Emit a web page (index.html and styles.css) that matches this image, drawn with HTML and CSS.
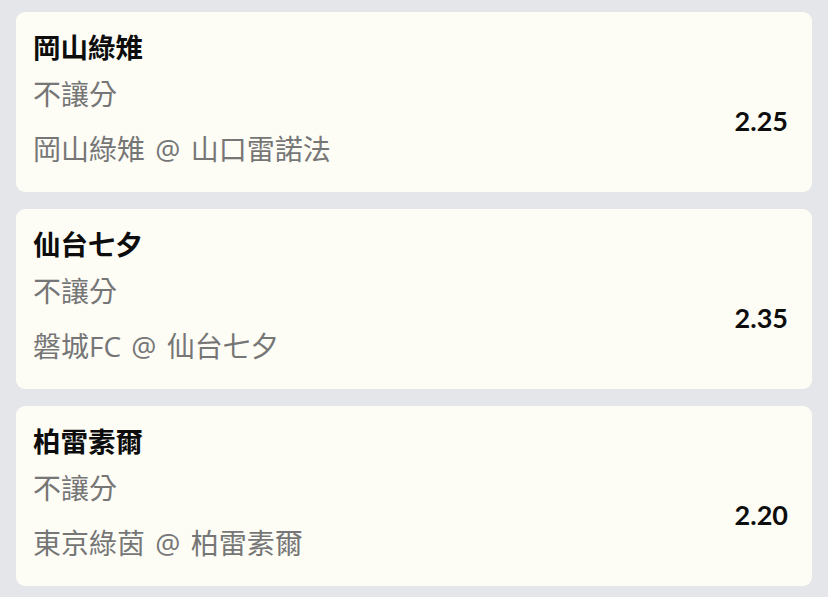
FILE: index.html
```html
<!DOCTYPE html>
<html lang="zh-Hant">
<head>
<meta charset="utf-8">
<link rel="stylesheet" href="styles.css">
</head>
<body>
<div class="list">
  <div class="card">
    <div class="title">岡山綠雉</div>
    <div class="row">
      <div class="info">
        <div class="market">不讓分</div>
        <div class="match">岡山綠雉 @ 山口雷諾法</div>
      </div>
      <div class="odds">2.25</div>
    </div>
  </div>
  <div class="card">
    <div class="title">仙台七夕</div>
    <div class="row">
      <div class="info">
        <div class="market">不讓分</div>
        <div class="match">磐城FC @ 仙台七夕</div>
      </div>
      <div class="odds">2.35</div>
    </div>
  </div>
  <div class="card">
    <div class="title">柏雷素爾</div>
    <div class="row">
      <div class="info">
        <div class="market">不讓分</div>
        <div class="match">東京綠茵 @ 柏雷素爾</div>
      </div>
      <div class="odds">2.20</div>
    </div>
  </div>
</div>
</body>
</html>
```
FILE: styles.css
```css
html, body {
  margin: 0;
  padding: 0;
  background: #e5e6ea;
}
body {
  font-family: Lato, "Noto Sans CJK TC", sans-serif;
}
.list {
  display: flex;
  flex-direction: column;
  gap: 17px;
  padding: 12px 16px 0 16px;
}
.card {
  background: #fdfdf6;
  border-radius: 9px;
  height: 180px;
  box-sizing: border-box;
  padding: 18px 24px 0 17px;
  display: flex;
  flex-direction: column;
}
.title {
  font-family: "Open Sans", "Noto Sans CJK TC", sans-serif;
  font-size: 27.5px;
  font-weight: 700;
  color: #0d0d0d;
  line-height: 36px;
}
.row {
  display: flex;
  align-items: center;
  justify-content: space-between;
  margin-top: 10px;
}
.info {
  display: flex;
  flex-direction: column;
  gap: 19px;
}
.market,
.match {
  font-family: "Open Sans", "Noto Sans CJK TC", sans-serif;
  font-size: 28px;
  color: #767676;
  line-height: 36px;
}
.match {
  word-spacing: 3px;
}
.odds {
  font-size: 27px;
  font-weight: 700;
  color: #0d0d0d;
  margin-top: -2px;
}
```
